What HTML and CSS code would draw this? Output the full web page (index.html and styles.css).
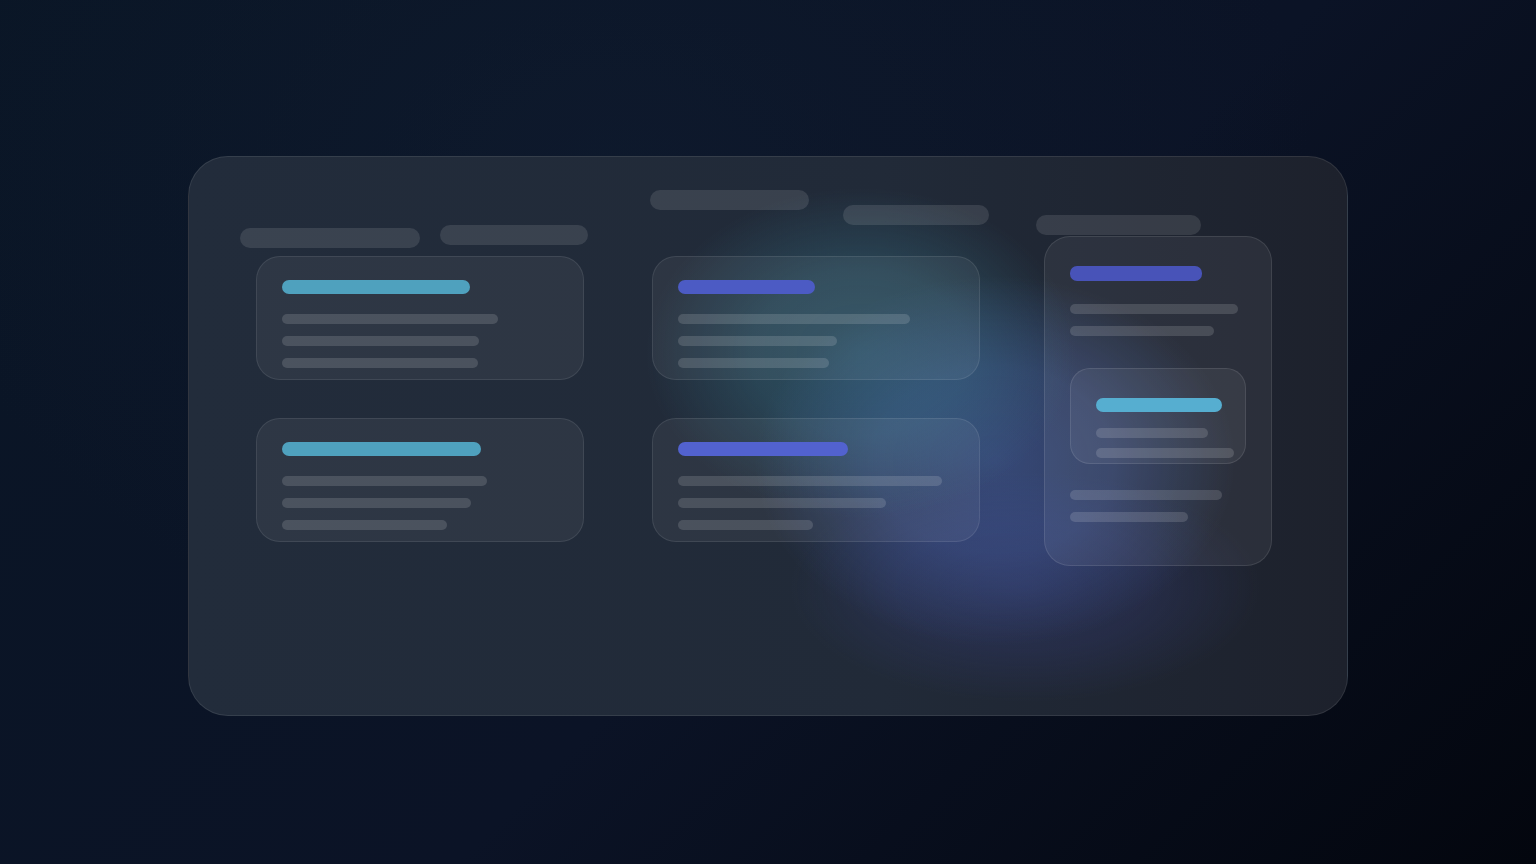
FILE: index.html
```html
<!DOCTYPE html>
<html lang="en">
<head>
<meta charset="utf-8">
<title>Board skeleton</title>
<link rel="stylesheet" href="styles.css">
</head>
<body>
<div class="panel">
  <div class="col col1">
    <div class="heads">
      <span class="pill p1"></span>
      <span class="pill p2"></span>
    </div>
    <div class="card first">
      <div class="title cyan w188"></div>
      <div class="line w216"></div>
      <div class="line w197"></div>
      <div class="line w196"></div>
    </div>
    <div class="card">
      <div class="title cyan w199"></div>
      <div class="line w205"></div>
      <div class="line w189"></div>
      <div class="line w165"></div>
    </div>
  </div>
  <div class="col col2">
    <div class="heads">
      <span class="pill p3"></span>
      <span class="pill p4"></span>
    </div>
    <div class="card first">
      <div class="title indigo w137"></div>
      <div class="line w232"></div>
      <div class="line w159"></div>
      <div class="line w151"></div>
    </div>
    <div class="card">
      <div class="title indigo bright w170"></div>
      <div class="line w264"></div>
      <div class="line w208"></div>
      <div class="line w135"></div>
    </div>
  </div>
  <div class="col col3">
    <div class="heads">
      <span class="pill p5"></span>
    </div>
    <div class="tall">
      <div class="title indigo deep w132"></div>
      <div class="line w168"></div>
      <div class="line w144"></div>
      <div class="inner">
        <div class="title cyan light w126"></div>
        <div class="line w112"></div>
        <div class="line w138"></div>
      </div>
      <div class="line after w152"></div>
      <div class="line w118"></div>
    </div>
  </div>
</div>
</body>
</html>
```

FILE: styles.css
```css
* { box-sizing: border-box; }

html, body {
  margin: 0;
  height: 100%;
}

body {
  width: 1536px;
  height: 864px;
  overflow: hidden;
  font-family: "Inter", "Liberation Sans", sans-serif;
  background:
    radial-gradient(ellipse 700px 500px at 40% 20%, rgba(20, 34, 56, 0.35), rgba(20, 34, 56, 0) 100%),
    linear-gradient(135deg, #0a1626 0%, #0b1326 55%, #03060e 100%);
  padding-top: 156px;
}

.panel {
  width: 1160px;
  height: 560px;
  margin-left: 188px;
  border-radius: 40px;
  border: 1px solid rgba(255, 255, 255, 0.09);
  padding-left: 51px;
  display: flex;
  align-items: flex-start;
  background:
    radial-gradient(ellipse 215px 165px at 672px 196px, rgba(62, 138, 160, 0.38) 0%, rgba(62, 138, 160, 0.28) 50%, rgba(62, 138, 160, 0) 100%),
    radial-gradient(ellipse 240px 185px at 806px 304px, rgba(86, 118, 210, 0.42) 0%, rgba(86, 118, 210, 0.30) 50%, rgba(86, 118, 210, 0) 100%),
    radial-gradient(ellipse 235px 115px at 836px 430px, rgba(62, 70, 150, 0.30) 0%, rgba(62, 70, 150, 0.20) 55%, rgba(62, 70, 150, 0) 100%),
    linear-gradient(90deg, #222c3b 0%, #212a38 60%, #1d212c 100%);
}

.col { display: flex; flex-direction: column; align-items: flex-start; }
.col1 { width: 348px; margin-top: 68px; }
.col2 { width: 339px; margin-top: 33px; margin-left: 62px; }
.col3 { margin-top: 58px; margin-left: 47px; }

.heads { display: flex; align-items: flex-start; }

.pill {
  display: block;
  height: 20px;
  border-radius: 10px;
  background: rgba(255, 255, 255, 0.11);
}
.p1 { width: 180px; margin-top: 3px; }
.p2 { width: 148px; margin-left: 20px; }
.p3 { width: 159px; }
.p4 { width: 146px; margin-left: 34px; margin-top: 15px; }
.p5 { width: 165px; }

.card {
  width: 328px;
  height: 124px;
  border-radius: 24px;
  border: 1px solid rgba(255, 255, 255, 0.09);
  background: rgba(255, 255, 255, 0.055);
  padding: 23px 25px;
  margin-top: 38px;
  display: flex;
  flex-direction: column;
  align-items: flex-start;
}
.col1 .card { margin-left: 16px; }
.col2 .card { margin-left: 2px; }
.col1 .card.first { margin-top: 8px; }
.col2 .card.first { margin-top: 31px; }

.title {
  height: 14px;
  border-radius: 7px;
  flex: none;
}
.cyan { background: #4fa1be; }
.cyan.light { background: #56aed0; }
.indigo { background: #4c5bc4; }
.indigo.bright { background: #5262cf; }
.indigo.deep { background: #4853b8; height: 15px; }

.line {
  height: 10px;
  border-radius: 5px;
  background: rgba(255, 255, 255, 0.14);
  margin-top: 12px;
  flex: none;
}
.title + .line { margin-top: 20px; }

.tall {
  width: 228px;
  height: 330px;
  margin-top: 1px;
  margin-left: 8px;
  border-radius: 26px;
  border: 1px solid rgba(255, 255, 255, 0.1);
  background: rgba(255, 255, 255, 0.06);
  padding: 29px 25px;
  display: flex;
  flex-direction: column;
  align-items: flex-start;
}
.tall > .title + .line { margin-top: 23px; }

.inner {
  width: 176px;
  height: 96px;
  margin-top: 32px;
  border-radius: 20px;
  border: 1px solid rgba(255, 255, 255, 0.1);
  background: rgba(255, 255, 255, 0.06);
  padding: 29px 25px;
  display: flex;
  flex-direction: column;
  align-items: flex-start;
}
.inner .title + .line { margin-top: 16px; }
.inner .line { margin-top: 10px; }
.line.after { margin-top: 26px; }

.w112 { width: 112px; }
.w118 { width: 118px; }
.w126 { width: 126px; }
.w132 { width: 132px; }
.w135 { width: 135px; }
.w137 { width: 137px; }
.w138 { width: 138px; }
.w144 { width: 144px; }
.w151 { width: 151px; }
.w152 { width: 152px; }
.w159 { width: 159px; }
.w165 { width: 165px; }
.w168 { width: 168px; }
.w170 { width: 170px; }
.w188 { width: 188px; }
.w189 { width: 189px; }
.w196 { width: 196px; }
.w197 { width: 197px; }
.w199 { width: 199px; }
.w205 { width: 205px; }
.w208 { width: 208px; }
.w216 { width: 216px; }
.w232 { width: 232px; }
.w264 { width: 264px; }
```
